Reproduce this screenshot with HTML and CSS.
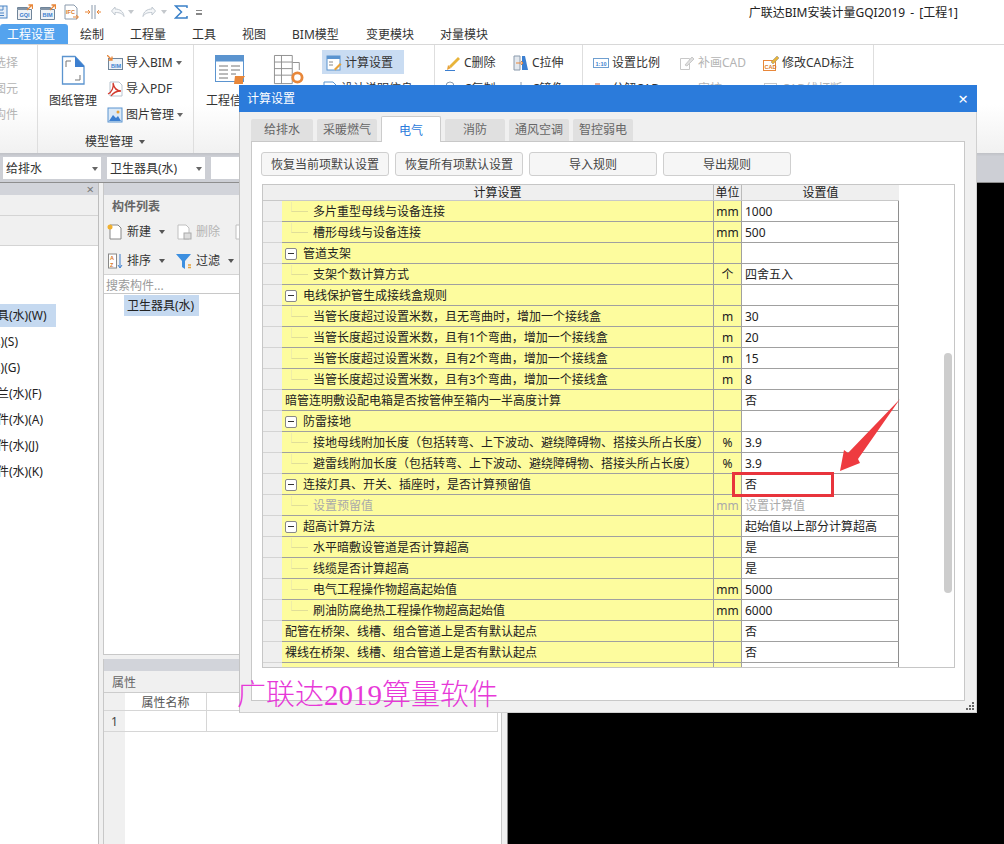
FILE: index.html
```html
<!DOCTYPE html>
<html lang="zh-CN">
<head>
<meta charset="utf-8">
<title>广联达BIM安装计量GQI2019 - [工程1]</title>
<link rel="stylesheet" href="styles.css">
</head>
<body>
<div class="app">
  <header class="qat">
    <svg class="ic ml-n8" viewBox="0 0 16 16"><rect x="1" y="2" width="14" height="12" fill="#e6eef8" stroke="#4d86c6"/><path d="M4 2v4h7V2M4 9h8M4 11.500h8" fill="none" stroke="#4d86c6"/></svg>
    <svg class="ic m9" viewBox="0 0 16 16"><path d="M.500 5.500V3.500h10v2h4v10H.500z" fill="#eef2f6" stroke="#6f8499"/><rect x="1" y="4" width="9" height="2" fill="#8394a6"/><text x="2.500" y="13" class="ict blue">GQI</text><path d="M10 6l5-5M11.500 1H15.500V5" fill="none" stroke="#e8873a" stroke-width="1.300"/></svg>
    <svg class="ic m7" viewBox="0 0 16 16"><path d="M.500 5.500V3.500h10v2h4v10H.500z" fill="#eef2f6" stroke="#6f8499"/><rect x="1" y="4" width="9" height="2" fill="#8394a6"/><text x="2.500" y="13" class="ict blue">BIM</text><path d="M10 6l5-5M11.500 1H15.500V5" fill="none" stroke="#e8873a" stroke-width="1.300"/></svg>
    <svg class="ic m8" viewBox="0 0 16 16"><path d="M1 1h9l3 3v11H1z" fill="#fff" stroke="#8a9aac"/><text x="2" y="10" class="ict orange">IFC</text><path d="M9 13h5M12 11l2.500 2-2.500 2" fill="none" stroke="#e8873a"/></svg>
    <svg class="ic m5" viewBox="0 0 16 16"><path d="M7 1v14M10 1v14" stroke="#8a9aac" fill="none"/><path d="M0 8h5M3 6l2 2-2 2M16 8h-4M14 6l-2 2 2 2" stroke="#e8873a" fill="none"/></svg>
    <svg class="ic m9" viewBox="0 0 16 16"><path d="M5 3L1.500 7 5 11V8.500c4 0 7 .5 9 4-.5-5-4-7.500-9-7.500z" fill="#f4f6f8" stroke="#c0c8d0"/></svg>
    <span class="caret grey m2"></span>
    <svg class="ic m7" viewBox="0 0 16 16"><path d="M11 3l3.500 4L11 11V8.500c-4 0-7 .5-9 4 .5-5 4-7.500 9-7.500z" fill="#f4f6f8" stroke="#c0c8d0"/></svg>
    <span class="caret grey m4"></span>
    <svg class="ic m7" viewBox="0 0 16 16"><path d="M13 4V2H1.500L7.500 8l-6 6H13v-2" fill="none" stroke="#3a80c8" stroke-width="1.500"/></svg>
    <span class="more m6"></span>
    <div class="appname">广联达BIM安装计量GQI2019 - [工程1]</div>
  </header>

  <nav class="tabs">
    <span class="tab active">工程设置</span>
    <span class="tab">绘制</span>
    <span class="tab">工程量</span>
    <span class="tab">工具</span>
    <span class="tab">视图</span>
    <span class="tab tab-bim">BIM模型</span>
    <span class="tab">变更模块</span>
    <span class="tab">对量模块</span>
  </nav>

  <section class="ribbon">
    <div class="group g0">
      <div class="small-col off clip-col">
        <div class="small">选择</div>
        <div class="small">图元</div>
        <div class="small">构件</div>
      </div>
    </div>

    <div class="group g1">
      <div class="group-body">
        <div class="large">
          <svg class="big" width="24" height="30" viewBox="0 0 24 30"><path d="M1.500 1.500H14L23 11v18H1.500z" fill="#fff" stroke="#5b94cf" stroke-width="1.300"/><path d="M14 1.500L23 11v1H14z" fill="#3c7fd0"/><path d="M5 12V6h5M19 20v5h-5" fill="none" stroke="#777"/></svg>
          <span>图纸管理</span>
        </div>
        <div class="small-col">
          <div class="small"><svg class="ic" viewBox="0 0 16 16"><rect x="1.500" y="3.500" width="14" height="11" fill="#eef3f8" stroke="#6f8499"/><text x="4" y="12.500" class="ict blue">BIM</text><path d="M0 0l5 5M5 1.500V5H1.500" stroke="#e8873a" fill="none" stroke-width="1.300"/></svg>导入BIM<span class="caret"></span></div>
          <div class="small"><svg class="ic" viewBox="0 0 16 16"><path d="M3 1h9l3 3v11H3z" fill="#fff" stroke="#b9c4cf"/><path d="M1 13c4-2 6-7 5-11 1 5 4 8 8 8-4 0-8 2-10 5" fill="none" stroke="#d23a2e" stroke-width="1.300"/></svg>导入PDF</div>
          <div class="small"><svg class="ic" viewBox="0 0 16 16"><rect x="1" y="1" width="14" height="14" fill="#dbe9f7" stroke="#5b94cf"/><path d="M2 14l4-6 3 3 2-2 3 5z" fill="#3c7fd0"/><circle cx="11" cy="5" r="1.500" fill="#e8a23a"/></svg>图片管理<span class="caret"></span></div>
        </div>
      </div>
      <div class="group-label">模型管理<span class="caret dark"></span></div>
    </div>

    <div class="group g2">
      <div class="group-body">
        <div class="large">
          <svg class="big" width="31" height="30" viewBox="0 0 31 30"><rect x=".500" y=".500" width="28" height="26" fill="#fff" stroke="#5b94cf"/><rect x=".500" y=".500" width="28" height="6" fill="#5b94cf"/><path d="M4 11h9M16 11h9M4 15h9M16 15h9M4 19h9M16 19h5M4 23h9" stroke="#777"/><path d="M20 21h10l-2 3v5H19z" fill="#e8873a"/></svg>
          <span>工程信息</span>
        </div>
        <div class="large">
          <svg class="big" width="31" height="32" viewBox="0 0 31 32"><path d="M.500.500h19v30h-19zM.500 7.500h19M.500 14.500h19M.500 21.500h19M8 .5v30" fill="#fff" stroke="#8c8c8c"/><path d="M20 8h7v8" fill="none" stroke="#8c8c8c"/><circle cx="25" cy="24" r="5" fill="none" stroke="#e8873a" stroke-width="3"/></svg>
        </div>
        <div class="small-col">
          <div class="small hl"><svg class="ic" viewBox="0 0 16 16"><rect x="1" y="1" width="13" height="14" fill="#fff" stroke="#5b94cf"/><rect x="1" y="1" width="13" height="3" fill="#5b94cf"/><path d="M3 7h4M3 10h4" stroke="#888"/><path d="M8 14l6-6 1.500 1.500-6 6" fill="#e8a23a"/></svg>计算设置</div>
          <div class="small"><svg class="ic" viewBox="0 0 16 16"><path d="M2 1h9l3 3v11H2z" fill="#fff" stroke="#5b94cf"/></svg>设计说明信息</div>
        </div>
      </div>
    </div>

    <div class="group g3">
      <div class="group-body">
        <div class="small-col w68">
          <div class="small"><svg class="ic" viewBox="0 0 16 16"><path d="M4 11L13 2l2 2-9 9z" fill="#e8b43a"/><path d="M3 10l3 3-4 2z" fill="#e8a23a"/><path d="M0 15.500h10" stroke="#3c7fd0"/></svg>C删除</div>
          <div class="small"><svg class="ic" viewBox="0 0 16 16"><circle cx="5" cy="5" r="4" fill="none" stroke="#8a9aac"/><path d="M8 8l6 6" stroke="#e8873a"/></svg>C复制</div>
        </div>
        <div class="small-col">
          <div class="small"><svg class="ic" viewBox="0 0 16 16"><path d="M1 1h6v14H1z" fill="#e3e8ee" stroke="#8a9aac"/><path d="M9 1h3l3 14H9z" fill="#3c7fd0"/><path d="M3 8h7M8 6l2 2-2 2" fill="none" stroke="#e8873a"/></svg>C拉伸</div>
          <div class="small"><svg class="ic" viewBox="0 0 16 16"><path d="M8 1v14" stroke="#8a9aac"/></svg>C镜像</div>
        </div>
      </div>
    </div>

    <div class="group g4">
      <div class="group-body">
        <div class="small-col w86">
          <div class="small"><svg class="ic" viewBox="0 0 16 16"><rect x=".500" y="3.500" width="15" height="9" fill="#fff" stroke="#6f9fd0"/><text x="2.500" y="10.500" class="ict blue">1:10</text></svg>设置比例</div>
          <div class="small"><svg class="ic" viewBox="0 0 16 16"><path d="M2 3h5M9 13h5" stroke="#c9572c"/></svg>分解CAD</div>
        </div>
        <div class="small-col w84 off">
          <div class="small"><svg class="ic" viewBox="0 0 16 16"><path d="M1.500 3.500h9v11h-9z" fill="#fff" stroke="#c8c8c8"/><path d="M6 10l7-8 2 2-7 7z" fill="#e0e0e0" stroke="#c8c8c8"/></svg>补画CAD</div>
          <div class="small"><svg class="ic" viewBox="0 0 16 16"><path d="M3 13l9-9" stroke="#c8c8c8"/></svg>审核</div>
        </div>
        <div class="small-col">
          <div class="small"><svg class="ic" viewBox="0 0 16 16"><rect x=".500" y="5.500" width="12" height="10" fill="#fff" stroke="#e8873a"/><text x="1.500" y="13.500" class="ict orange">CAD</text><path d="M8 7l6-6 2 2-6 6z" fill="#e8b43a" stroke="#888" stroke-width=".5"/></svg>修改CAD标注</div>
          <div class="small off"><svg class="ic" viewBox="0 0 16 16"><rect x="1.500" y="2.500" width="12" height="12" fill="none" stroke="#c8c8c8"/></svg>CAD线打断</div>
        </div>
      </div>
    </div>
  </section>

  <div class="filters">
    <div class="sel">给排水<span class="caret"></span></div>
    <div class="sel">卫生器具(水)<span class="caret"></span></div>
    <div class="sel last"></div>
  </div>

  <main class="workspace">
    <aside class="left">
      <div class="grey-head"><span class="x">×</span></div>
      <div class="band b1"></div>
      <div class="band b2"></div>
      <ul class="tree">
        <li class="on"><span>卫生器具(水)(W)</span></li>
        <li><span>设备(水)(S)</span></li>
        <li><span>管道(水)(G)</span></li>
        <li><span>阀门法兰(水)(F)</span></li>
        <li><span>管道附件(水)(A)</span></li>
        <li><span>通头管件(水)(J)</span></li>
        <li><span>零星构件(水)(K)</span></li>
      </ul>
    </aside>

    <div class="middle">
      <section class="list-panel">
        <div class="grey-head"></div>
        <div class="panel-title">构件列表</div>
        <div class="tool-row">
          <span class="tool"><svg class="ic" viewBox="0 0 16 16"><path d="M3 1h8l3 3v11H3z" fill="#fff" stroke="#888"/><circle cx="3" cy="3" r="2.500" fill="#f0b030"/></svg>新建<span class="caret dark"></span></span>
          <span class="tool off"><svg class="ic" viewBox="0 0 16 16"><path d="M2 1h8l3 3v11H2z" fill="#fff" stroke="#c0c0c0"/><rect x="8" y="9" width="7" height="6" fill="#ddd" stroke="#aaa"/></svg>删除</span>
          <span class="tool off spaced"><svg class="ic" viewBox="0 0 16 16"><path d="M2 1h8l3 3v11H2z" fill="#fff" stroke="#c0c0c0"/></svg></span>
        </div>
        <div class="tool-row">
          <span class="tool"><svg class="ic" viewBox="0 0 16 16"><rect x="1.500" y="1" width="8" height="14" fill="#fff" stroke="#888"/><text x="3" y="7" class="ict orange">A</text><text x="3" y="13.500" class="ict orange">Z</text><path d="M13 1v13M11 12l2 3 2-3" stroke="#3c7fd0" fill="none"/></svg>排序<span class="caret dark"></span></span>
          <span class="tool"><svg class="ic" viewBox="0 0 16 16"><path d="M0 1h15L9 8v8l-3-2V8z" fill="#3c8fe0"/><path d="M12 12h3M12 14.500h3" stroke="#e8a23a" stroke-width="1.300"/></svg>过滤<span class="caret dark"></span></span>
        </div>
        <div class="search">搜索构件...</div>
        <div class="item-wrap"><span class="item">卫生器具(水)</span></div>
      </section>
      <section class="prop-panel">
        <div class="grey-head"></div>
        <div class="panel-title">属性</div>
        <div class="prop-body">
          <div class="prop-row head"><span class="pg"></span><span class="pn">属性名称</span><span class="pv"></span></div>
          <div class="prop-row"><span class="pg num">1</span><span class="pn"></span><span class="pv"></span></div>
        </div>
      </section>
    </div>

    <div class="canvas"></div>
  </main>

  <div class="dialog">
    <div class="dlg-title"><span>计算设置</span><span class="dlg-close">×</span></div>
    <div class="dlg-tabs">
      <span class="dtab">给排水</span>
      <span class="dtab">采暖燃气</span>
      <span class="dtab active">电气</span>
      <span class="dtab">消防</span>
      <span class="dtab">通风空调</span>
      <span class="dtab">智控弱电</span>
    </div>
    <div class="dlg-panel">
      <div class="dlg-buttons">
        <button class="btn">恢复当前项默认设置</button>
        <button class="btn">恢复所有项默认设置</button>
        <button class="btn">导入规则</button>
        <button class="btn">导出规则</button>
      </div>
      <div class="grid-box">
        <table class="grid">
          <colgroup><col class="c0"><col class="c1"><col class="c2"><col class="c3"></colgroup>
          <thead><tr><th></th><th>计算设置</th><th>单位</th><th>设置值</th></tr></thead>
          <tbody>
            <tr><td class="g"></td><td class="n"><div class="l2"><i class="guide"></i>多片重型母线与设备连接</div></td><td class="u">mm</td><td class="v">1000</td></tr>
            <tr><td class="g"></td><td class="n"><div class="l2"><i class="guide"></i>槽形母线与设备连接</div></td><td class="u">mm</td><td class="v">500</td></tr>
            <tr><td class="g"></td><td class="n"><div class="l1"><i class="minus"></i>管道支架</div></td><td class="u"></td><td class="v"></td></tr>
            <tr><td class="g"></td><td class="n"><div class="l2"><i class="guide"></i>支架个数计算方式</div></td><td class="u">个</td><td class="v">四舍五入</td></tr>
            <tr><td class="g"></td><td class="n"><div class="l1"><i class="minus"></i>电线保护管生成接线盒规则</div></td><td class="u"></td><td class="v"></td></tr>
            <tr><td class="g"></td><td class="n"><div class="l2"><i class="guide"></i>当管长度超过设置米数，且无弯曲时，增加一个接线盒</div></td><td class="u">m</td><td class="v">30</td></tr>
            <tr><td class="g"></td><td class="n"><div class="l2"><i class="guide"></i>当管长度超过设置米数，且有1个弯曲，增加一个接线盒</div></td><td class="u">m</td><td class="v">20</td></tr>
            <tr><td class="g"></td><td class="n"><div class="l2"><i class="guide"></i>当管长度超过设置米数，且有2个弯曲，增加一个接线盒</div></td><td class="u">m</td><td class="v">15</td></tr>
            <tr><td class="g"></td><td class="n"><div class="l2"><i class="guide"></i>当管长度超过设置米数，且有3个弯曲，增加一个接线盒</div></td><td class="u">m</td><td class="v">8</td></tr>
            <tr><td class="g"></td><td class="n"><div class="l0">暗管连明敷设配电箱是否按管伸至箱内一半高度计算</div></td><td class="u"></td><td class="v">否</td></tr>
            <tr><td class="g"></td><td class="n"><div class="l1"><i class="minus"></i>防雷接地</div></td><td class="u"></td><td class="v"></td></tr>
            <tr><td class="g"></td><td class="n"><div class="l2"><i class="guide"></i>接地母线附加长度（包括转弯、上下波动、避绕障碍物、搭接头所占长度）</div></td><td class="u">%</td><td class="v">3.9</td></tr>
            <tr><td class="g"></td><td class="n"><div class="l2"><i class="guide"></i>避雷线附加长度（包括转弯、上下波动、避绕障碍物、搭接头所占长度）</div></td><td class="u">%</td><td class="v">3.9</td></tr>
            <tr><td class="g"></td><td class="n"><div class="l1"><i class="minus"></i>连接灯具、开关、插座时，是否计算预留值</div></td><td class="u"></td><td class="v">否</td></tr>
            <tr class="dis"><td class="g"></td><td class="n"><div class="l2"><i class="guide"></i>设置预留值</div></td><td class="u">mm</td><td class="v">设置计算值</td></tr>
            <tr><td class="g"></td><td class="n"><div class="l1"><i class="minus"></i>超高计算方法</div></td><td class="u"></td><td class="v">起始值以上部分计算超高</td></tr>
            <tr><td class="g"></td><td class="n"><div class="l2"><i class="guide"></i>水平暗敷设管道是否计算超高</div></td><td class="u"></td><td class="v">是</td></tr>
            <tr><td class="g"></td><td class="n"><div class="l2"><i class="guide"></i>线缆是否计算超高</div></td><td class="u"></td><td class="v">是</td></tr>
            <tr><td class="g"></td><td class="n"><div class="l2"><i class="guide"></i>电气工程操作物超高起始值</div></td><td class="u">mm</td><td class="v">5000</td></tr>
            <tr><td class="g"></td><td class="n"><div class="l2"><i class="guide"></i>刷油防腐绝热工程操作物超高起始值</div></td><td class="u">mm</td><td class="v">6000</td></tr>
            <tr><td class="g"></td><td class="n"><div class="l0">配管在桥架、线槽、组合管道上是否有默认起点</div></td><td class="u"></td><td class="v">否</td></tr>
            <tr><td class="g"></td><td class="n"><div class="l0">裸线在桥架、线槽、组合管道上是否有默认起点</div></td><td class="u"></td><td class="v">否</td></tr>
            <tr><td class="g"></td><td class="n"><div class="l1"><i class="minus"></i></div></td><td class="u"></td><td class="v"></td></tr>
          </tbody>
        </table>
        <div class="thumb"></div>
      </div>
    </div>
    <svg class="grip" width="10" height="10" viewBox="0 0 10 10"><path d="M7 1h2v2H7zM4 4h2v2H4zM7 4h2v2H7zM1 7h2v2H1zM4 7h2v2H4zM7 7h2v2H7z" fill="#666"/></svg>
  </div>

  <div class="mark-box"></div>
  <svg class="arrow" width="64" height="76" viewBox="0 0 64 76"><path d="M62 1L20 61l2 4L2 73l4-21 4 3z" fill="#ee3b40"/></svg>
  <div class="watermark">广联达2019算量软件</div>
</div>
</body>
</html>
```
FILE: styles.css
```css
* { box-sizing: border-box; }
html, body { margin: 0; padding: 0; background: #fff; }
body { font: 12px/16px "Noto Sans", "Noto Sans CJK SC", sans-serif; color: #333; }
ul { list-style: none; margin: 0; padding: 0; }

.app { position: relative; width: 1004px; height: 844px; overflow: hidden; display: flex; flex-direction: column; background: #fff; }

.ic { width: 16px; height: 16px; flex: none; display: block; }
.ict { font: 5.500px "Liberation Sans", sans-serif; font-weight: 700; }
.blue { fill: #3c7fd0; }
.orange { fill: #d9771f; }

.caret { display: inline-block; width: 0; height: 0; border: 3px solid transparent; border-top: 4px solid #666; border-bottom: 0; flex: none; }
.caret.grey { border-top-color: #c4c8cc; }
.caret.dark { border-top-color: #555; }

/* quick access */
.qat { height: 24px; display: flex; align-items: center; flex: none; }
.ml-n8 { margin-left: -8px; }
.m2 { margin-left: 2px; }
.m4 { margin-left: 4px; }
.m5 { margin-left: 5px; }
.m6 { margin-left: 6px; }
.m7 { margin-left: 7px; }
.m8 { margin-left: 8px; }
.m9 { margin-left: 9px; }
.more { width: 6px; height: 5px; border-top: 1px solid #888; border-bottom: 2px solid #888; flex: none; }
.appname { margin-left: auto; margin-right: 46px; padding-top: 1px; color: #222; word-spacing: 2px; }

/* tabs */
.tabs { height: 21px; flex: none; display: flex; gap: 26px; border-bottom: 1px solid #d8d8d8; }
.tab { line-height: 22px; height: 20px; color: #333; }
.tab-bim { width: 48px; white-space: nowrap; }
.tab.active { width: 68px; margin-right: -14px; padding-left: 7px; color: #fff; background: #54a3ee; border-radius: 3px 3px 0 0; }

/* ribbon */
.ribbon { height: 108px; flex: none; display: flex; background: linear-gradient(#fff, #fff 55%, #f1f1f1); }
.group { height: 100%; border-right: 1px solid #dedede; display: flex; flex-direction: column; overflow: hidden; }
.g0 { width: 38px; }
.g1 { width: 156px; padding-left: 11px; }
.g2 { width: 241px; padding-left: 12px; }
.g3 { width: 148px; padding-left: 10px; }
.g4 { width: 291px; padding-left: 10px; }
.group-body { display: flex; height: 84px; flex: none; }
.group-label { height: 24px; padding: 2px 0 0 36px; display: flex; align-items: center; gap: 6px; color: #333; }
.large { width: 48px; padding-top: 10px; display: flex; flex-direction: column; align-items: center; flex: none; margin-right: 10px; }
.large .big { height: 30px; display: block; margin-bottom: 7px; flex: none; overflow: visible; }
.large span { line-height: 18px; white-space: nowrap; }
.small-col { padding-top: 4px; flex: none; }
.small { height: 26px; padding-top: 2px; display: flex; align-items: center; gap: 3px; white-space: nowrap; }
.small.hl { width: 82px; height: 24px; margin: 1px 0; padding-left: 4px; background: #c9dcf2; }
.off, .off .small { color: #b4b4b4; }
.w68 { width: 68px; }
.w86 { width: 86px; }
.w84 { width: 84px; }
.clip-col { width: 18px; display: flex; flex-direction: column; align-items: flex-end; }

/* filter bar */
.filters { height: 30px; flex: none; display: flex; gap: 6px; padding: 4px 0 0 3px; background: linear-gradient(#bfc1c6, #cdcfd5 12%); border-bottom: 1px solid #8e8e8e; }
.sel { width: 98px; height: 22px; padding: 2px 3px 0; display: flex; align-items: center; justify-content: space-between; background: #fff; color: #333; }
.sel.last { width: 60px; }

/* workspace */
.workspace { flex: 1; min-height: 0; display: flex; background: #f0f0f0; }
.grey-head { height: 12px; display: flex; justify-content: flex-end; align-items: center; background: #d2d4da; flex: none; }
.x { margin-right: 4px; color: #777; font-size: 13px; line-height: 12px; }
.left { width: 99px; flex: none; background: #fff; border-right: 1px solid #bdbdbd; overflow: hidden; }
.band { background: #f0f0f0; border-bottom: 1px solid #d4d4d4; }
.b1 { height: 21px; }
.b2 { height: 30px; }
.tree { margin-top: 58px; }
.tree li { height: 26px; line-height: 23px; margin-left: -39px; white-space: nowrap; }
.tree li span { display: inline-block; height: 23px; padding-right: 9px; color: #222; }
.tree li.on span { background: #c5d9f0; }

.middle { width: 399px; margin-left: 4px; flex: none; display: flex; flex-direction: column; gap: 4px; }
.list-panel { height: 472px; flex: none; background: #fff; border: 1px solid #c8c8c8; border-top: 0; overflow: hidden; }
.panel-title { height: 21px; padding-left: 8px; line-height: 23px; background: #f0f0f0; color: #666; font-weight: 700; flex: none; }
.tool-row { height: 29px; padding: 2px 0 0 3px; display: flex; align-items: center; gap: 11px; background: #f0f0f0; }
.tool { display: flex; align-items: center; gap: 4px; }
.tool .caret { margin-left: 4px; }
.tool.spaced { margin-left: 3px; }
.search { height: 20px; padding-left: 2px; line-height: 21px; color: #9a9a9a; background: #fff; border-top: 1px solid #d4d4d4; border-bottom: 1px solid #c8c8c8; }
.item-wrap { padding: 1px 0 0 20px; }
.item { display: inline-block; height: 21px; padding: 0 5px 0 3px; line-height: 21px; background: #c5d9f0; color: #222; }

.prop-panel { flex: 1; background: linear-gradient(to right, #f0f0f0 21px, #fff 21px); border: 1px solid #c8c8c8; border-top: 0; border-bottom: 0; }
.prop-panel .panel-title { height: 22px; font-weight: 400; border-bottom: 1px solid #ccc; }
.prop-body { width: 394px; }
.prop-row { display: flex; height: 21px; border-bottom: 1px solid #d6d6d6; }
.prop-row.head { height: 18px; }
.prop-row span { display: block; line-height: 20px; }
.pg { width: 21px; background: #f0f0f0; flex: none; }
.prop-row .num { text-align: center; line-height: 22px; color: #444; }
.pn { width: 82px; text-align: center; border-right: 1px solid #d6d6d6; color: #555; flex: none; background: #fff; }
.pv { flex: 1; border-right: 1px solid #d6d6d6; background: #fff; }

.canvas { flex: 1; margin-left: 5px; background: #000; border-left: 1px solid #888; }

/* dialog */
.dialog { position: absolute; left: 239px; top: 85px; width: 738px; height: 628px; background: #f0f0f0; display: flex; flex-direction: column; border: 1px solid #d0d0d0; border-top: 0; border-left-color: #c4c4c4; }
.dlg-title { height: 27px; flex: none; margin: 0 -1px; padding: 0 8px; display: flex; align-items: center; justify-content: space-between; background: #2b7bdb; color: #fff; }
.dlg-close { font-size: 17px; line-height: 20px; margin-right: 1px; }
.dlg-tabs { height: 29px; flex: none; padding: 7px 0 0 11px; display: flex; gap: 4px; }
.dtab { width: 60px; height: 22px; line-height: 22px; text-align: center; background: #e0e0e0; color: #666; border-radius: 2px 2px 0 0; }
.dtab:first-child { width: 62px; }
.dtab.active { height: 26px; margin-top: -3px; padding-top: 2px; line-height: 24px; background: #fff; color: #2b7bdb; border: 1px solid #ccc; border-bottom: 0; position: relative; z-index: 1; }
.dlg-panel { width: 714px; height: 560px; margin-left: 11px; flex: none; padding: 10px; background: #fff; border: 1px solid #c8c8c8; }
.dlg-buttons { display: flex; gap: 6px; height: 32px; padding-bottom: 8px; margin-left: -1px; }
.btn { width: 128px; height: 24px; padding: 2px 0 0; font: inherit; color: #444; background: #f6f6f6; border: 1px solid #cfcfcf; border-radius: 3px; }
.grid-box { width: 693px; height: 484px; display: flex; align-items: flex-start; overflow: hidden; background: #fff; border: 1px solid #c6c6c6; }
.grid { width: 636px; flex: none; table-layout: fixed; border-collapse: separate; border-spacing: 0; color: #222; }
.c0 { width: 19px; }
.c1 { width: 431px; }
.c2 { width: 28px; }
.c3 { width: 158px; }
.grid th { height: 15px; padding: 0; font-weight: 400; line-height: 15px; background: #efefef; border-bottom: 1px solid #c8c8c8; overflow: hidden; }
.grid th:nth-child(3), .grid th:nth-child(4) { border-left: 1px solid #bbb; }
.grid td { height: 21px; padding: 2px 0 0; line-height: 18px; border-bottom: 1px solid #a0a0a0; white-space: nowrap; overflow: hidden; }
.grid .g { background: #efefef; border-bottom-color: #d4d4d4; }
.grid .n { padding: 0; background: #fdfc9e; }
.grid .u { text-align: center; background: #fdfc9e; border-left: 1px solid #a0a0a0; }
.grid .v { padding-left: 3px; background: #fff; border-left: 1px solid #a0a0a0; border-right: 1px solid #8e8e8e; }
.l0, .l1, .l2 { display: flex; align-items: center; height: 20px; padding-top: 2px; }
.l0 { padding-left: 3px; }
.l1 { padding-left: 3px; }
.l2 { padding-left: 9px; }
.guide { display: block; width: 17px; height: 10px; margin: -10px 5px 0 0; border-left: 1px solid #efeda8; border-bottom: 1px solid #e0de98; flex: none; }
.minus { position: relative; display: block; width: 12px; height: 12px; margin-right: 6px; background: #fff; border: 1px solid #888; border-radius: 2px; flex: none; }
.minus::after { content: ""; position: absolute; left: 2px; top: 4px; width: 6px; height: 1px; background: #333; }
.grid .dis td { color: #aaa; }
.thumb { width: 8px; height: 240px; margin: 168px 2px 0 auto; background: #cdcdcd; border-radius: 4px; flex: none; }
.grip { position: absolute; right: 1px; bottom: 1px; }

/* annotations drawn over the screenshot */
.mark-box { position: absolute; left: 732px; top: 472px; width: 102px; height: 25px; border: 3px solid #e8343c; }
.arrow { position: absolute; left: 838px; top: 398px; }
.watermark { position: absolute; left: 237px; top: 676px; font: 300 29px/38px "Liberation Serif", "Noto Sans CJK SC", serif; color: #e738d8; white-space: nowrap; }
```
